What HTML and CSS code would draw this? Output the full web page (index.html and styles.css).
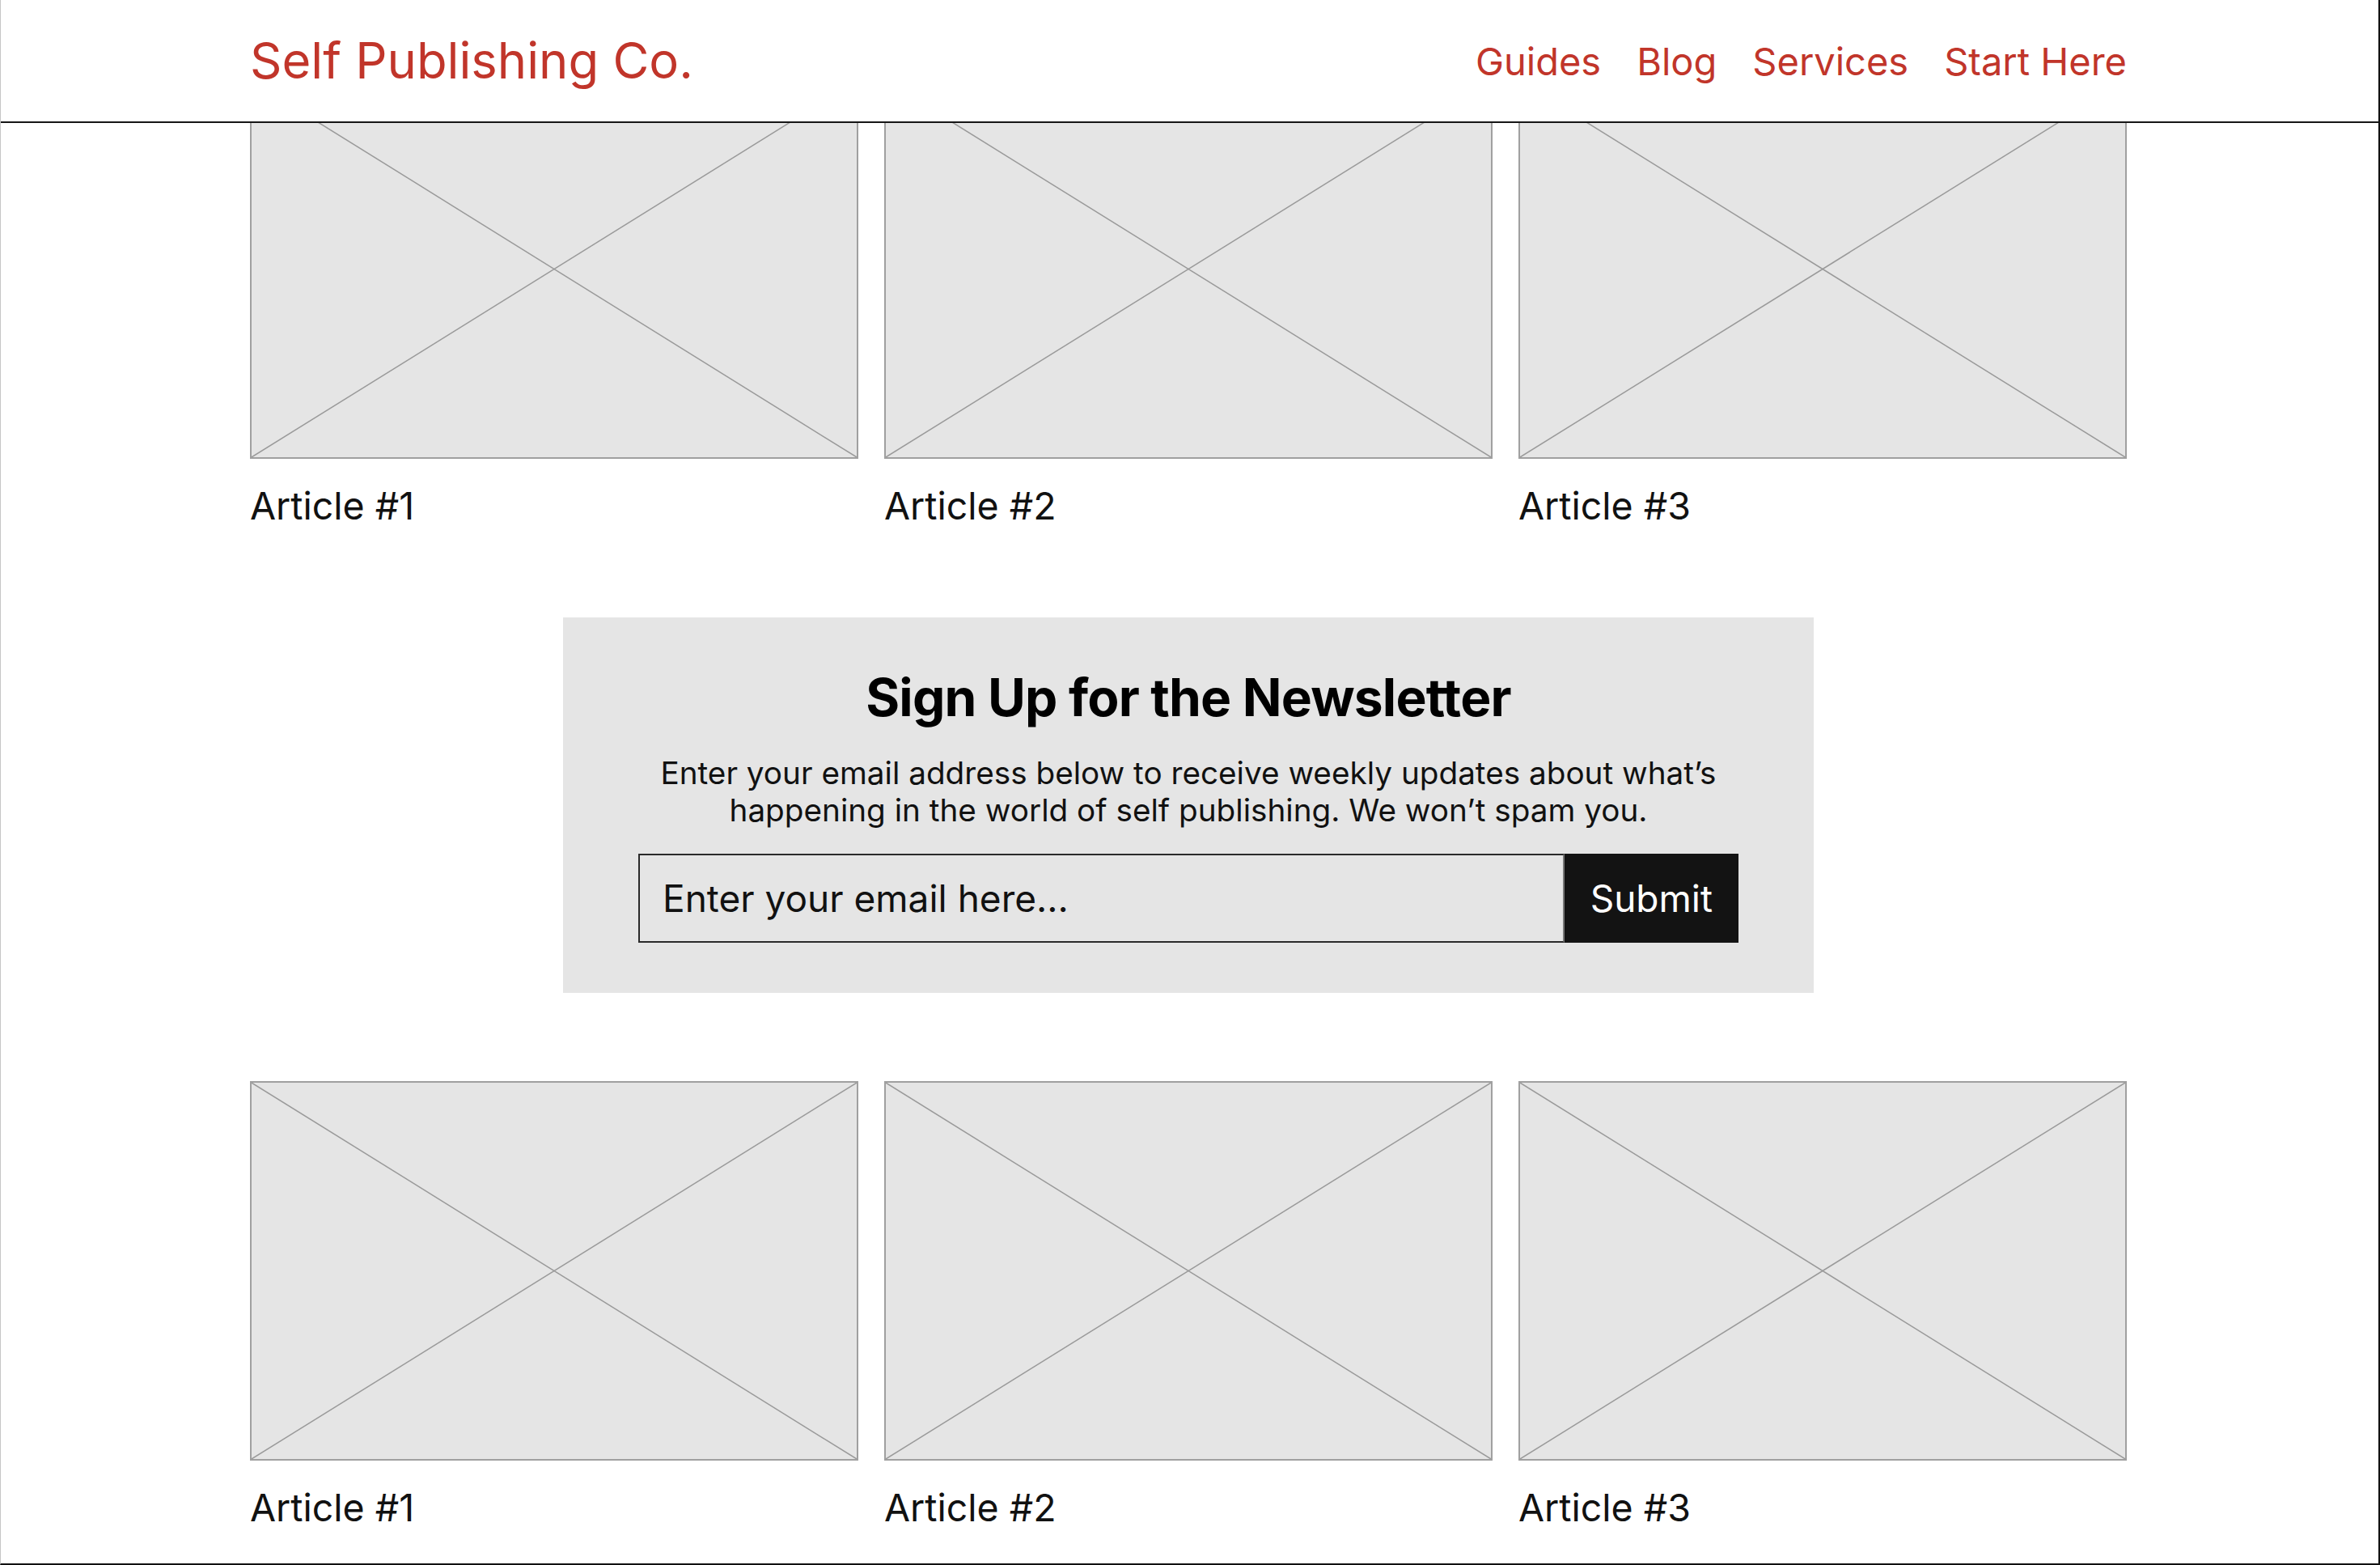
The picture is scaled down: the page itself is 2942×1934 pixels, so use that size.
FILE: index.html
```html
<!DOCTYPE html>
<html lang="en">
<head>
<meta charset="utf-8">
<title>Self Publishing Co.</title>
<link rel="stylesheet" href="styles.css">
</head>
<body>
<header class="site-header">
  <div class="container header-inner">
    <a class="logo" href="#">Self Publishing Co.</a>
    <nav class="nav">
      <a href="#">Guides</a>
      <a href="#">Blog</a>
      <a href="#">Services</a>
      <a href="#">Start Here</a>
    </nav>
  </div>
</header>

<main class="container main">
  <section class="articles">
    <article class="card">
      <div class="thumb"><svg viewBox="0 0 100 100" preserveAspectRatio="none"><line x1="0" y1="0" x2="100" y2="100"/><line x1="100" y1="0" x2="0" y2="100"/></svg></div>
      <h3 class="card-title">Article #1</h3>
    </article>
    <article class="card">
      <div class="thumb"><svg viewBox="0 0 100 100" preserveAspectRatio="none"><line x1="0" y1="0" x2="100" y2="100"/><line x1="100" y1="0" x2="0" y2="100"/></svg></div>
      <h3 class="card-title">Article #2</h3>
    </article>
    <article class="card">
      <div class="thumb"><svg viewBox="0 0 100 100" preserveAspectRatio="none"><line x1="0" y1="0" x2="100" y2="100"/><line x1="100" y1="0" x2="0" y2="100"/></svg></div>
      <h3 class="card-title">Article #3</h3>
    </article>
  </section>

  <section class="newsletter">
    <h2 class="newsletter-title">Sign Up for the Newsletter</h2>
    <p class="newsletter-text">Enter your email address below to receive weekly updates about what’s happening in the world of self publishing. We won’t spam you.</p>
    <form class="signup">
      <input class="signup-input" type="email" placeholder="Enter your email here...">
      <button class="signup-button" type="button">Submit</button>
    </form>
  </section>

  <section class="articles">
    <article class="card">
      <div class="thumb"><svg viewBox="0 0 100 100" preserveAspectRatio="none"><line x1="0" y1="0" x2="100" y2="100"/><line x1="100" y1="0" x2="0" y2="100"/></svg></div>
      <h3 class="card-title">Article #1</h3>
    </article>
    <article class="card">
      <div class="thumb"><svg viewBox="0 0 100 100" preserveAspectRatio="none"><line x1="0" y1="0" x2="100" y2="100"/><line x1="100" y1="0" x2="0" y2="100"/></svg></div>
      <h3 class="card-title">Article #2</h3>
    </article>
    <article class="card">
      <div class="thumb"><svg viewBox="0 0 100 100" preserveAspectRatio="none"><line x1="0" y1="0" x2="100" y2="100"/><line x1="100" y1="0" x2="0" y2="100"/></svg></div>
      <h3 class="card-title">Article #3</h3>
    </article>
  </section>
</main>
</body>
</html>
```

FILE: styles.css
```css
* { box-sizing: border-box; }

html, body { height: 100%; }

body {
  margin: 0;
  padding-right: 3px;
  min-height: 100vh;
  background: #ffffff;
  color: #111111;
  font-family: "Inter", "Liberation Sans", sans-serif;
  border-left: 1px solid #c6c6c6;
  border-right: 2px solid #111111;
  border-bottom: 2px solid #111111;
  overflow: hidden;
}

.container {
  width: 2320px;
  margin: 0 auto;
}

/* Header */
.site-header {
  position: fixed;
  top: 0;
  left: 1px;
  right: 2px;
  height: 152px;
  padding-right: 3px;
  background: #ffffff;
  border-bottom: 2px solid #161616;
  z-index: 10;
}

.header-inner {
  height: 150px;
  display: flex;
  align-items: center;
  justify-content: space-between;
}

.logo {
  color: #c1352a;
  text-decoration: none;
  font-size: 61.5px;
  line-height: 1;
}

.nav {
  display: flex;
  gap: 44px;
}

.nav a {
  color: #c1352a;
  text-decoration: none;
  font-size: 47px;
  line-height: 1;
}

/* Main */
.main {
  padding-top: 98px;
  display: flex;
  flex-direction: column;
  align-items: center;
  gap: 109px;
}

.articles {
  width: 100%;
  display: grid;
  grid-template-columns: repeat(3, 1fr);
  gap: 32px;
}

.thumb {
  height: 469px;
  background: #e5e5e5;
  border: 2px solid #a0a0a0;
}

.thumb svg {
  display: block;
  width: 100%;
  height: 100%;
}

.thumb line {
  stroke: #9a9a9a;
  stroke-width: 1.5;
  vector-effect: non-scaling-stroke;
}

.card-title {
  margin: 30px 0 0;
  font-size: 46.5px;
  line-height: 57px;
  font-weight: 400;
  color: #111111;
}

/* Newsletter */
.newsletter {
  width: 1546px;
  background: #e5e5e5;
  padding: 60px 93px 62px;
  text-align: center;
}

.newsletter-title {
  margin: 0 0 32px;
  font-size: 64px;
  line-height: 77px;
  font-weight: 700;
  color: #000000;
  letter-spacing: -0.8px;
}

.newsletter-text {
  margin: 0 0 31px;
  font-size: 38.7px;
  line-height: 46px;
  color: #111111;
}

.signup {
  display: flex;
  height: 110px;
}

.signup-input {
  flex: 1;
  min-width: 0;
  height: 100%;
  margin: 0;
  padding: 0 28px;
  background: #e5e5e5;
  border: 2px solid #2a2a2a;
  border-right-color: #777777;
  border-radius: 0;
  font-family: inherit;
  font-size: 46px;
  color: #111111;
  outline: none;
}

.signup-input::placeholder {
  color: #111111;
  opacity: 1;
}

.signup-button {
  height: 100%;
  margin: 0;
  padding: 0 32px;
  background: #131313;
  border: none;
  border-radius: 0;
  font-family: inherit;
  font-size: 46px;
  color: #ffffff;
  cursor: pointer;
}
```
